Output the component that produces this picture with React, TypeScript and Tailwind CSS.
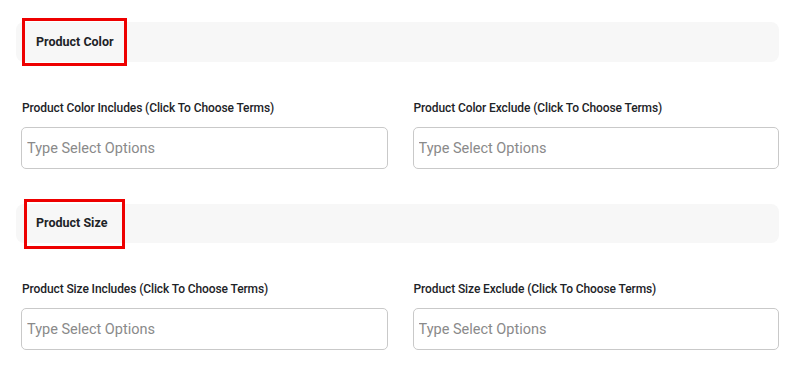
import React from 'react';

const Field = ({ label }: { label: string }) => (
  <div className="flex flex-col">
    <label className="text-[12px] font-medium text-[#1d2327] leading-[14px] tracking-[-0.1px] pl-[1px]">
      {label}
    </label>
    <input
      type="text"
      placeholder="Type Select Options"
      className="mt-[12px] h-[42px] w-full rounded-[5px] border border-[#c9c9c9] bg-white px-[5px] text-[14.5px] text-[#333] placeholder:text-[#8a8a8a] outline-none"
    />
  </div>
);

const Section = ({
  title,
  name,
  boxClass,
  barClass,
}: {
  title: string;
  name: string;
  boxClass: string;
  barClass: string;
}) => (
  <section>
    <div className={`flex items-center rounded-[8px] bg-[#f7f7f7] -ml-[5px] ${barClass}`}>
      <span className={`flex items-center border-[3px] border-[#ee0000] text-[12.5px] font-bold text-[#1d2327] ${boxClass}`}>
        {title}
      </span>
    </div>
    <div className="grid grid-cols-2 gap-x-[25px]">
      <Field label={`${name} Includes (Click To Choose Terms)`} />
      <Field label={`${name} Exclude (Click To Choose Terms)`} />
    </div>
  </section>
);

export default function App() {
  return (
    <div
      className="min-h-[383px] w-[804px] bg-white pl-[21px] pr-[25px] pt-[22px]"
      style={{ fontFamily: 'Roboto, "Liberation Sans", sans-serif' }}
    >
      <Section
        title="Product Color"
        name="Product Color"
        barClass="h-[40px] mb-[39px]"
        boxClass="ml-[6px] h-[48px] w-[105px] pl-[11px]"
      />
      <div className="mt-[35px]">
        <Section
          title="Product Size"
          name="Product Size"
          barClass="h-[39px] mb-[39px]"
          boxClass="ml-[8px] h-[50px] w-[101px] pl-[9px]"
        />
      </div>
    </div>
  );
}
